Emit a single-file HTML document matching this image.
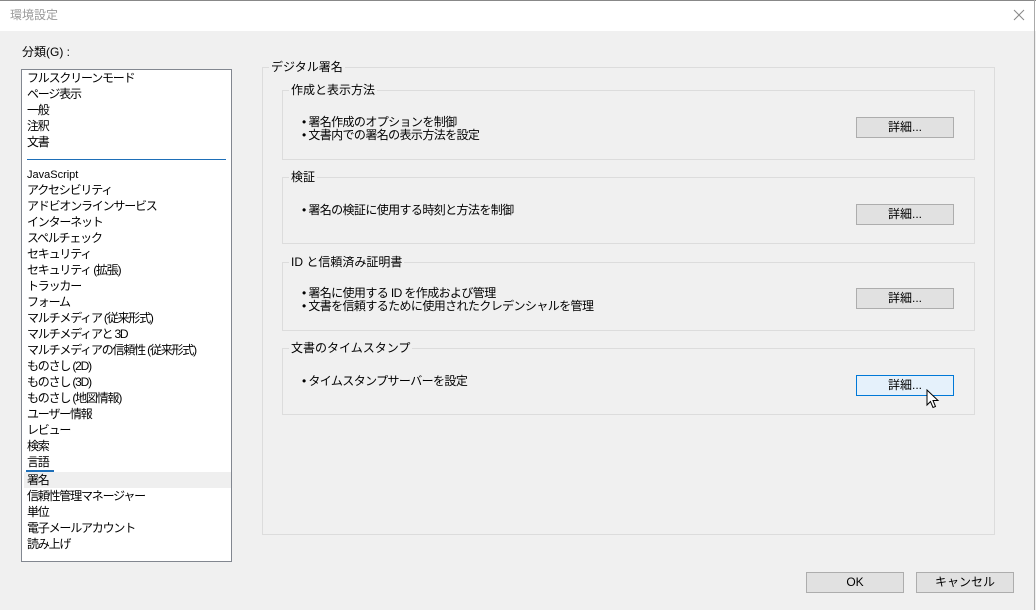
<!DOCTYPE html>
<html><head><meta charset="utf-8"><style>
*{margin:0;padding:0;box-sizing:border-box}
body{width:1036px;height:610px;background:#f0f0f0;font-family:"Liberation Sans","Noto Sans CJK JP",sans-serif;font-size:12px;color:#000;position:relative;overflow:hidden}
.a{position:absolute;white-space:nowrap;line-height:16px}
.b{position:absolute;white-space:nowrap;line-height:12.5px;letter-spacing:-0.6px}
.title{position:absolute;left:0;top:0;width:1036px;height:31px;background:#fff;border-top:1px solid #888}
.gb{position:absolute;border:1px solid #dcdcdc}
.gt{position:absolute;background:#f0f0f0;padding:0 2px;line-height:16px;top:-9px;left:6px}
.btn{position:absolute;width:98px;height:21px;border:1px solid #adadad;background:#e1e1e1;text-align:center;line-height:19px}
.list{position:absolute;left:21px;top:69px;width:211px;height:493px;border:1px solid #828790;background:#fff;letter-spacing:-1.2px}
.it{position:absolute;left:5px;line-height:16px;white-space:nowrap}
</style></head><body>
<div class="title"></div>
<div class="a" style="left:10px;top:7px;color:#999">環境設定</div>
<svg class="a" style="left:1013px;top:9px" width="12" height="12"><path d="M1 1L11 11M11 1L1 11" stroke="#888" stroke-width="1"/></svg>
<div style="position:absolute;right:1px;top:0;width:1px;height:610px;background:#aaa"></div>
<div class="a" style="left:22px;top:44px">分類(G) :</div>
<div class="list">
<div class="it" style="top:0">フルスクリーンモード</div>
<div class="it" style="top:16px">ページ表示</div>
<div class="it" style="top:32px">一般</div>
<div class="it" style="top:48px">注釈</div>
<div class="it" style="top:64px">文書</div>
<div style="position:absolute;left:5px;top:89px;width:199px;height:1px;background:#1e6fb8"></div>
<div class="it" style="top:97px;font-size:11px;letter-spacing:0">JavaScript</div>
<div class="it" style="top:112px">アクセシビリティ</div>
<div class="it" style="top:128px">アドビオンラインサービス</div>
<div class="it" style="top:144px">インターネット</div>
<div class="it" style="top:160px">スペルチェック</div>
<div class="it" style="top:176px">セキュリティ</div>
<div class="it" style="top:192px">セキュリティ (拡張)</div>
<div class="it" style="top:208px">トラッカー</div>
<div class="it" style="top:224px">フォーム</div>
<div class="it" style="top:240px">マルチメディア (従来形式)</div>
<div class="it" style="top:256px">マルチメディアと 3D</div>
<div class="it" style="top:272px">マルチメディアの信頼性 (従来形式)</div>
<div class="it" style="top:288px">ものさし (2D)</div>
<div class="it" style="top:304px">ものさし (3D)</div>
<div class="it" style="top:320px">ものさし (地図情報)</div>
<div class="it" style="top:336px">ユーザー情報</div>
<div class="it" style="top:352px">レビュー</div>
<div class="it" style="top:368px">検索</div>
<div class="it" style="top:384px">言語</div>
<div style="position:absolute;left:4px;top:400px;width:28px;height:2px;background:#1e6fb8"></div>
<div style="position:absolute;left:2px;top:402px;width:207px;height:16px;background:#efefef"></div>
<div class="it" style="top:402px">署名</div>
<div class="it" style="top:418px">信頼性管理マネージャー</div>
<div class="it" style="top:434px">単位</div>
<div class="it" style="top:450px">電子メールアカウント</div>
<div class="it" style="top:466px">読み上げ</div>
</div>

<div class="gb" style="left:262px;top:67px;width:733px;height:468px"><div class="gt">デジタル署名</div></div>

<div class="gb" style="left:282px;top:90px;width:693px;height:70px"><div class="gt">作成と表示方法</div></div>
<div class="b" style="left:302px;top:116px">• 署名作成のオプションを制御<br>• 文書内での署名の表示方法を設定</div>
<div class="btn" style="left:856px;top:117px">詳細...</div>

<div class="gb" style="left:282px;top:177px;width:693px;height:67px"><div class="gt">検証</div></div>
<div class="b" style="left:302px;top:204px">• 署名の検証に使用する時刻と方法を制御</div>
<div class="btn" style="left:856px;top:204px">詳細...</div>

<div class="gb" style="left:282px;top:262px;width:693px;height:69px"><div class="gt">ID と信頼済み証明書</div></div>
<div class="b" style="left:302px;top:287px">• 署名に使用する ID を作成および管理<br>• 文書を信頼するために使用されたクレデンシャルを管理</div>
<div class="btn" style="left:856px;top:288px">詳細...</div>

<div class="gb" style="left:282px;top:348px;width:693px;height:67px"><div class="gt">文書のタイムスタンプ</div></div>
<div class="b" style="left:302px;top:375px">• タイムスタンプサーバーを設定</div>
<div class="btn" style="left:856px;top:375px;background:#e5f1fb;border-color:#0078d7">詳細...</div>
<svg class="a" style="left:926px;top:389px" width="14" height="22"><path d="M1 1L1 16L4.5 12.5L7 18.5L9.5 17.5L7 11.5L12 11.5Z" fill="#fff" stroke="#000" stroke-width="1"/></svg>

<div class="btn" style="left:806px;top:572px">OK</div>
<div class="btn" style="left:916px;top:572px">キャンセル</div>
</body></html>
